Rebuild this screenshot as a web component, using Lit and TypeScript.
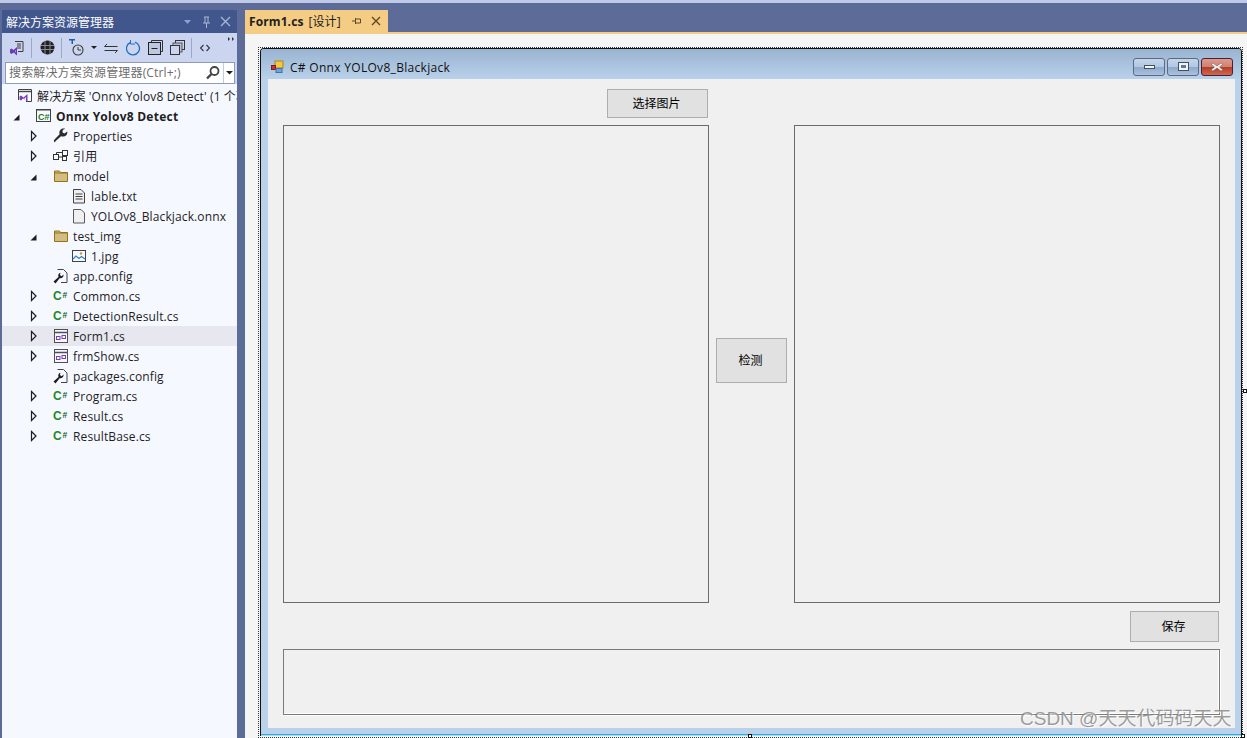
import { LitElement, html, css, svg } from "lit";
import { customElement } from "lit/decorators.js";

const D = "#1e1e1e";
const ic = (body: unknown, w = 16, h = 16) =>
  html`<svg width=${w} height=${h} viewBox="0 0 ${w} ${h}" fill="none">${body}</svg>`;

const closedArrow = ic(svg`<path d="M1.5 1.5 L6 6 L1.5 10.5 Z" stroke="${D}" stroke-width="1.2" fill="#f6f8ff"/>`, 7, 12);
const openArrow = ic(svg`<path d="M0.5 10.5 L6.5 10.5 L6.5 4.5 Z" fill="${D}"/>`, 7, 12);

const icons: Record<string, unknown> = {
  sln: ic(svg`<path d="M1.5 12V1.5h13v12H9" stroke="#424242" stroke-width="1"/><path d="M1.5 3.5h13" stroke="#424242" stroke-width="1.4"/>
    <path d="M3 8.5l2.5 2 4-3.5v8l-4-3.5-2.5 2-1.5-1v-3z" fill="#7a3fb5" transform="translate(1 -1)"/><path d="M5 10.5l1.5 1-1.5 1z M9 9v4l-2-2z" fill="#f6f8ff"/>`),
  csproj: ic(svg`<rect x="0.5" y="1.5" width="14" height="12" fill="#f6f8ff" stroke="#424242"/><path d="M1 2h13" stroke="#424242" stroke-width="1"/>
    <text x="2" y="11.5" font-family="Liberation Sans" font-size="9" font-weight="700" fill="#1f7a1f">C#</text>`),
  wrench: ic(svg`<path d="M1.5 14.5l1.5-1.8 5-4.5c2.2.8 4.6.2 5.8-1.7.5-.9.7-2 .4-3l-2.7 2-2-1 .2-2.4 2.4-1.3c-1.600-.5-3.600-.1-4.800 1.300-1 1.200-1.200 2.800-.7 4.100L2 11l-1.200 1.500z" fill="#2b2b2b"/>`),
  refs: ic(svg`<rect x="0.500" y="6.500" width="5" height="5" stroke="#333" fill="#f6f8ff"/><rect x="9.500" y="2.500" width="5" height="5" stroke="#333" fill="#f6f8ff"/><rect x="9.500" y="8.500" width="4" height="4" stroke="#333" fill="#f6f8ff"/><path d="M6 9h3M3.500 6V4.500H9" stroke="#333"/>`),
  folder: ic(svg`<path d="M1.500 13.500V3h5l1 1.500h7v9z" fill="#d2bc84" stroke="#947412"/><path d="M1.500 5h13" stroke="#947412" stroke-width="1"/>`),
  txt: ic(svg`<path d="M2.500 1.500h7.500l3.500 3.500v10h-11z" fill="#f0eff1" stroke="#424242"/><path d="M4.500 6h7M4.500 8.500h7M4.500 11h7" stroke="#424242"/>`),
  doc: ic(svg`<path d="M2.500 1.500h7.500l3.500 3.500v10h-11z" fill="#f0eff1" stroke="#5a5a5a"/>`),
  img: ic(svg`<rect x="1.500" y="2.500" width="13" height="11" fill="#f6f8ff" stroke="#424242"/><circle cx="10" cy="5.500" r="1.200" fill="#c69a2a"/><path d="M2 11l3-3 3 2.500 2.500-2 3.500 2.500" stroke="#3a7fc1" stroke-width="1.200"/>`),
  cfg: ic(svg`<path d="M4.500 1.500h6l3.500 3.500v9.500H8" fill="#f6f8ff" stroke="#424242"/><path d="M0.500 13.500l5-4.500c-.8-2 .2-3.800 2-4.300l-.6 2.300 1.700 1.200 2-1.700c.2 2.400-1.600 4.200-4 3.800L2.500 15.500z" fill="#1e1e1e"/>`),
  cs: ic(svg`<text x="0" y="12" font-family="Liberation Sans" font-size="12" font-weight="700" fill="#1f8a1f">C</text><text x="9.500" y="9.500" font-family="Liberation Sans" font-size="8.500" font-weight="700" fill="#17611f">#</text>`),
  form: ic(svg`<rect x="1.500" y="1.500" width="13" height="13" fill="#f6f8ff" stroke="#505050"/><path d="M2 4.500h12" stroke="#505050" stroke-width="1.500"/><rect x="3.500" y="8.500" width="3.500" height="3" stroke="#7a3fb5"/><rect x="9" y="7.500" width="3.500" height="3" stroke="#7a3fb5"/>`),
};

const rows: [number, string, string, string, string?][] = [
  [0, "", "sln", "解决方案 'Onnx Yolov8 Detect' (1 个项目)"],
  [1, "o", "csproj", "Onnx Yolov8 Detect", "bold"],
  [2, "c", "wrench", "Properties"],
  [2, "c", "refs", "引用"],
  [2, "o", "folder", "model"],
  [3, "", "txt", "lable.txt"],
  [3, "", "doc", "YOLOv8_Blackjack.onnx"],
  [2, "o", "folder", "test_img"],
  [3, "", "img", "1.jpg"],
  [2, "", "cfg", "app.config"],
  [2, "c", "cs", "Common.cs"],
  [2, "c", "cs", "DetectionResult.cs"],
  [2, "c", "form", "Form1.cs", "sel"],
  [2, "c", "form", "frmShow.cs"],
  [2, "", "cfg", "packages.config"],
  [2, "c", "cs", "Program.cs"],
  [2, "c", "cs", "Result.cs"],
  [2, "c", "cs", "ResultBase.cs"],
];

const sep = html`<span class="sep"></span>`;

@customElement("app-root")
export class AppRoot extends LitElement {
  static styles = css`
    :host { display: block; width: 1247px; height: 738px; overflow: hidden; position: relative;
      font-family: "Open Sans", "Noto Sans CJK SC", sans-serif; font-size: 12px; color: #1e1e1e; }
    * { box-sizing: border-box; }
    svg { display: block; flex: none; }
    .app { height: 738px; background: #5d6b99; display: flex; flex-direction: column; }
    .strip { height: 3px; background: #c0c9e8; flex: none; }
    .main { flex: 1; display: flex; padding-top: 7px; min-height: 0; }
    .panel { width: 235px; margin-left: 2px; display: flex; flex-direction: column; flex: none; }
    .ptitle { height: 23px; background: #40568d; color: #fff; display: flex; align-items: center; padding-left: 4px; font-size: 12px; flex: none; font-family: "Noto Sans CJK SC", sans-serif; }
    .ptitle .t { flex: 1; }
    .ptitle .btns { display: flex; gap: 9px; align-items: center; padding-right: 6px; }
    .toolbar { height: 29px; background: #ccd5f0; display: flex; align-items: center; gap: 7px; padding-left: 7px; flex: none; position: relative; }
    .sep { width: 1px; height: 20px; background: #9aa7c7; flex: none; margin-left: -1px; }
    .wide { margin-left: 1px; }
    .more { position: absolute; right: 3px; top: 4px; }
    .search { height: 22px; background: #ccd5f0; padding: 0 2px 0 3px; flex: none; }
    .sbox { height: 22px; background: #fff; border: 1px solid #8e9bbc; display: flex; align-items: center; }
    .sbox .ph { flex: 1; padding: 0 0 2px 3px; color: #6d6d6d; white-space: nowrap; font-size: 12px; letter-spacing: .15px; }
    .sbox .glass { margin-right: 3px; }
    .sbox .dd { width: 11px; height: 20px; border-left: 1px solid #c3cbe0; display: flex; align-items: center; justify-content: center; }
    .tree { flex: 1; background: #f6f8ff; padding-top: 2px; overflow: hidden; }
    .row { height: 20px; display: flex; align-items: center; white-space: nowrap; overflow: hidden; line-height: 20px; }
    .row.sel { background: #e6e7ef; }
    .row.bold .label { font-weight: 700; letter-spacing: .25px; }
    .slot { width: 27px; flex: none; padding-left: 4px; }
    .lv0 { padding-left: 15px; }
    .lv0 .slot { width: 0; padding: 0; }
    .lv1 { padding-left: 7px; }
    .lv2 { padding-left: 24px; }
    .lv3 { padding-left: 42px; }
    .row .label { margin: 2px 0 0 4px; letter-spacing: .13px; }
    .doc { flex: 1; margin-left: 8px; display: flex; flex-direction: column; min-width: 0; }
    .tabs { height: 22px; display: flex; flex: none; }
    .tab { width: 143px; background: #f5cc84; display: flex; align-items: center; padding-left: 4px; color: #1e1e1e; }
    .tab b { font-weight: 700; margin-right: 5px; }
    .tab .name { flex: 1; white-space: nowrap; letter-spacing: .1px; }
    .tab .pin { margin-right: 10px; }
    .tab .x { margin-right: 7px; }
    .tabline { height: 2px; background: #f5cc84; flex: none; }
    .surface { flex: 1; background: #f5f5f5; padding: 13px 3px 0 13px; min-height: 0; position: relative; }
    .sel-box { height: 691px; border: 1px dotted #333; padding: 0 0 0 1px; width: 985px; }
    .form { height: 688px; width: 982px; border: 1px solid #111; border-bottom: none; border-radius: 4px 4px 0 0; background: #b9d1ea; display: flex; flex-direction: column; }
    .ftitle { height: 30px; background: linear-gradient(#99b4d1, #b9d1ea); display: flex; align-items: center; padding: 5px 8px 0 10px; flex: none; border-radius: 3px 3px 0 0; }
    .ftitle .cap { flex: 1; margin: 2px 0 0 6px; font-size: 12px; color: #111; letter-spacing: .3px; }
    .wbtns { display: flex; gap: 2px; }
    .wb { width: 32px; height: 18px; border: 1px solid #5a6a85; border-radius: 3px; display: flex; align-items: center; justify-content: center;
      background: linear-gradient(#c4d5ea 0, #b2c8e2 48%, #8ea8c8 50%, #a9c2de 100%); }
    .wb.close { border-color: #4d1f2f; background: linear-gradient(#dd9a90 0, #d28070 48%, #b73a24 50%, #cc6a52 100%); }
    .client { height: 649px; margin: 0 6px 0 7px; background: #f0f0f0; padding: 10px 15px 0; display: flex; flex-direction: column; flex: none; font-family: "Noto Sans CJK SC", "Open Sans", sans-serif; }
    .fline { height: 1px; background: #19b8dc; margin-top: 6px; flex: none; }
    .btn { background: #e1e1e1; border: 1px solid #adadad; color: #000; display: flex; align-items: center; justify-content: center; font-size: 12px; flex: none; padding: 0 2px 2px 0; }
    .b-pick { width: 101px; height: 29px; margin-left: 324px; }
    .pics { display: flex; gap: 7px; margin-top: 7px; }
    .pic { width: 426px; height: 478px; border: 1px solid #6b6b6b; flex: none; }
    .b-detect { width: 71px; height: 45px; margin-top: 213px; }
    .b-save { width: 89px; height: 31px; margin: 8px 1px 0 auto; }
    .tbox { height: 66px; margin-top: 7px; border: 1px solid #7a7a7a; box-shadow: 1px 1px 0 #fff, inset -1px -1px 0 #fff; flex: none; }
    .grab { position: absolute; width: 4px; height: 4px; background: #fff; border: 1px solid #111; }
    .g1 { left: 998px; top: 355px; }
    .g2 { left: 503px; top: 700px; }
    .g3 { left: 996px; top: 700px; }
    .wm { position: absolute; left: 1020px; top: 706px; font-size: 19px; line-height: 26px; white-space: nowrap; color: rgba(125,125,125,.75);
      text-shadow: 1px 1px 1px rgba(255,255,255,.8); font-family: "Liberation Sans", "Noto Sans CJK SC", sans-serif; pointer-events: none; }
  `;

  render() {
    return html`<div class="app">
      <div class="strip"></div>
      <div class="main">
        <div class="panel">
          <div class="ptitle">
            <span class="t">解决方案资源管理器</span>
            <span class="btns">
              ${ic(svg`<path d="M1 2h7L4.500 6z" fill="#8fa0c9"/>`, 9, 8)}
              ${ic(svg`<path d="M3 1h5M4 1v6M7 1v6M2 7h7M5.500 7v5" stroke="#a9b6d6"/>`, 10, 12)}
              ${ic(svg`<path d="M1 1l9 9M10 1l-9 9" stroke="#a9b6d6" stroke-width="1.300"/>`, 11, 11)}
            </span>
          </div>
          <div class="toolbar">
            ${ic(svg`<path d="M6 1.500h8v10H9" stroke="#3c3c3c"/><path d="M8 4h4M8 6h4M8 8h4" stroke="#3c3c3c"/>
              <path d="M1 9.500l1.500-1 2 1.500 3.500-3v8.500l-3.500-3-2 1.500-1.500-1z" fill="#6c3bb0"/><path d="M6 11l1-.8v2.600z" fill="#ccd5f0"/>`, 16, 16)}
            ${sep}
            <span class="wide">${ic(svg`<circle cx="7.500" cy="7.500" r="7" fill="#202020"/><path d="M1 5.500h13M1 9.500h13M5 1v13M10 1v13" stroke="#8a8a9a" stroke-width="1"/>`, 15, 15)}</span>
            ${sep}
            ${ic(svg`<path d="M0 0h6v1.500H4V5H2.500V1.500H0z" fill="#1f5fa8"/><circle cx="9" cy="11" r="5" stroke="#3a3a3a" stroke-width="1.100"/><path d="M9 8v3h3" stroke="#3a3a3a"/>`, 15, 17)}
            ${ic(svg`<path d="M0 0h6L3 3z" fill="#1e1e1e"/>`, 6, 3)}
            ${ic(svg`<path d="M0.500 5.500h13M3 3l-2.500 2.500M0.500 9.500h13M11 12l2.500-2.500" stroke="#333" stroke-width="1"/>`, 14, 13)}
            <span class="wide">${ic(svg`<path d="M4 2.600A6.500 6.500 0 1 0 9 2.200" stroke="#1f6fc0" stroke-width="1.300"/><path d="M4.500 0v4H9" stroke="#1f6fc0" stroke-width="1"/>`, 15, 16)}</span>
            ${ic(svg`<path d="M3.500 3V.5h11v11H12" stroke="#333"/><rect x="0.500" y="2.500" width="12" height="12" fill="#bcc7e0" stroke="#222" stroke-width="1"/><path d="M3.500 8.500h6" stroke="#222"/>`, 15, 15)}
            ${ic(svg`<rect x="5.500" y="0.500" width="9" height="9" stroke="#333"/><rect x="3" y="3" width="9" height="9" fill="#b6bfd8" stroke="#555"/><rect x="0.500" y="5.500" width="9" height="9" fill="#ccd5f0" stroke="#333"/>`, 15, 15)}
            ${sep}
            <span class="wide">${ic(svg`<path d="M3.500 1L.5 4l3 3M6.500 1l3 3-3 3" stroke="#333" stroke-width="1.100"/>`, 10, 8)}</span>
            <span class="more">${ic(svg`<path d="M0 0l2 2-2 2zM4 0l-0 4 2-2z" fill="#333"/>`, 6, 4)}</span>
          </div>
          <div class="search">
            <div class="sbox">
              <span class="ph">搜索解决方案资源管理器(Ctrl+;)</span>
              <span class="glass">${ic(svg`<circle cx="8.500" cy="5" r="4" stroke="#444" stroke-width="1.800"/><path d="M5.500 8L1 12.500" stroke="#444" stroke-width="2.400"/>`, 14, 14)}</span>
              <span class="dd">${ic(svg`<path d="M0 0h7L3.500 3.500z" fill="#1e1e1e"/>`, 7, 4)}</span>
            </div>
          </div>
          <div class="tree">
            ${rows.map(([lv, arrow, icon, label, flag]) => html`<div class="row lv${lv} ${flag ?? ""}">
              <span class="slot">${arrow === "c" ? closedArrow : arrow === "o" ? openArrow : ""}</span>
              ${icons[icon]}
              <span class="label">${label}</span>
            </div>`)}
          </div>
        </div>
        <div class="doc">
          <div class="tabs">
            <div class="tab">
              <span class="name"><b>Form1.cs</b>[设计]</span>
              <span class="pin">${ic(svg`<path d="M3.500 2v6M3.500 3h5v4h-5M0 5h3.500" stroke="#5d4a25"/>`, 9, 10)}</span>
              <span class="x">${ic(svg`<path d="M1 1l8 8M9 1l-8 8" stroke="#5d4a25" stroke-width="1.400"/>`, 10, 10)}</span>
            </div>
          </div>
          <div class="tabline"></div>
          <div class="surface">
            <div class="sel-box">
              <div class="form">
                <div class="ftitle">
                  ${ic(svg`<rect x="4" y="1" width="8" height="7" fill="#f3c73f" stroke="#a98320"/><rect x="0.500" y="5.500" width="4" height="4" fill="#cf2f2f" stroke="#7a1f1f"/><rect x="5" y="8.500" width="6" height="4" fill="#6ea4dc" stroke="#3f72ad"/>`, 13, 13)}
                  <span class="cap">C# Onnx YOLOv8_Blackjack</span>
                  <div class="wbtns">
                    <div class="wb">${ic(svg`<rect x="0.500" y="0.500" width="10" height="3" fill="#f4f4f4" stroke="#3f4f66"/>`, 11, 4)}</div>
                    <div class="wb">${ic(svg`<rect x="0.500" y="0.500" width="10" height="8" fill="#f4f4f4" stroke="#3f4f66"/><rect x="3" y="3" width="5" height="3" fill="#5a7aa0"/>`, 11, 9)}</div>
                    <div class="wb close">${ic(svg`<path d="M2 1l4 3 4-3 2 1-3.500 3 3.500 3-2 1-4-3-4 3-2-1 3.500-3L0 2z" fill="#f4f4f4" stroke="#555" stroke-width=".5"/>`, 12, 10)}</div>
                  </div>
                </div>
                <div class="client">
                  <div class="btn b-pick">选择图片</div>
                  <div class="pics">
                    <div class="pic"></div>
                    <div class="btn b-detect">检测</div>
                    <div class="pic"></div>
                  </div>
                  <div class="btn b-save">保存</div>
                  <div class="tbox"></div>
                </div>
                <div class="fline"></div>
              </div>
            </div>
            <span class="grab g1"></span><span class="grab g2"></span><span class="grab g3"></span>
          </div>
        </div>
      </div>
      <div class="wm">CSDN @天天代码码天天</div>
    </div>`;
  }
}
